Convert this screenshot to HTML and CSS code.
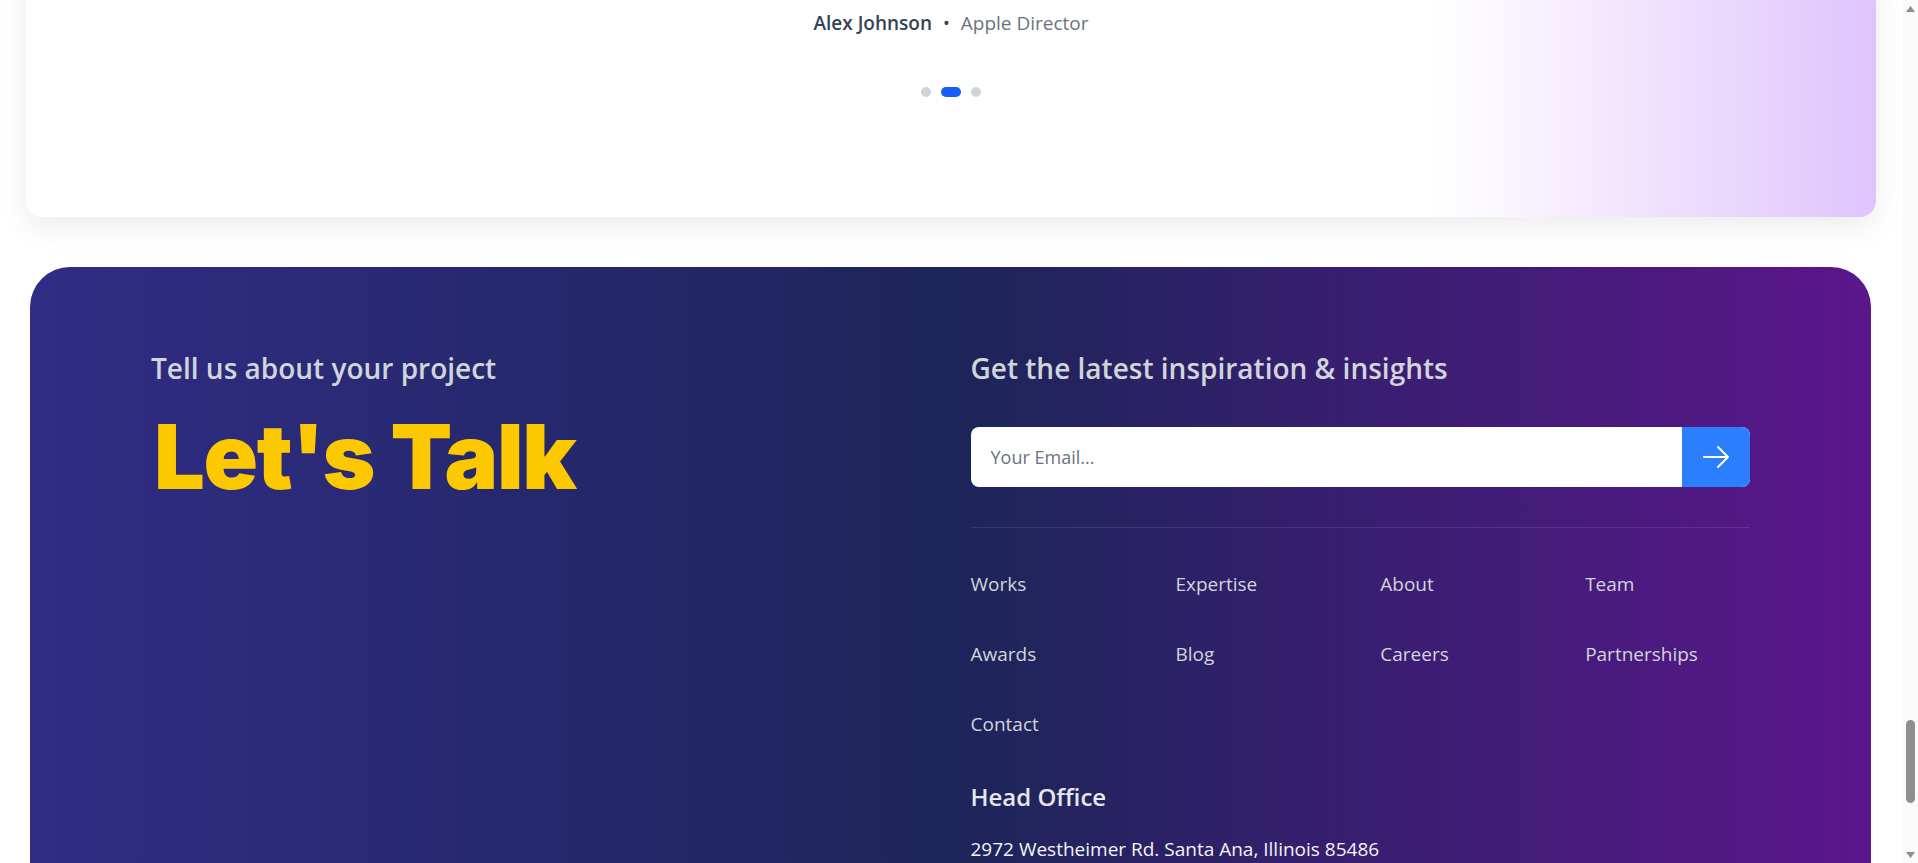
FILE: index.html
```html
<!DOCTYPE html>
<html lang="en">
<head>
<meta charset="utf-8">
<title>Let's Talk</title>
<link rel="stylesheet" href="styles.css">
</head>
<body>
  <section class="testimonial">
    <div class="author">
      <span class="name">Alex Johnson</span>
      <span class="sep">•</span>
      <span class="role">Apple Director</span>
    </div>
    <div class="dots">
      <span class="dot"></span>
      <span class="dot active"></span>
      <span class="dot"></span>
    </div>
  </section>

  <footer class="footer">
    <div class="footer-inner">
      <div class="col-left">
        <h3 class="eyebrow">Tell us about your project</h3>
        <h2 class="talk">Let's Talk</h2>
      </div>
      <div class="col-right">
        <h3 class="eyebrow">Get the latest inspiration &amp; insights</h3>
        <form class="subscribe">
          <input class="email" type="email" placeholder="Your Email...">
          <button class="send" type="button" aria-label="Subscribe">
            <svg width="32" height="32" viewBox="0 0 24 24" fill="none" stroke="#fff" stroke-width="1.5" stroke-linecap="round" stroke-linejoin="round"><path d="M13.5 4.5 21 12m0 0-7.5 7.5M21 12H3"/></svg>
          </button>
        </form>
        <hr class="divider">
        <nav class="links">
          <a href="#">Works</a>
          <a href="#">Expertise</a>
          <a href="#">About</a>
          <a href="#">Team</a>
          <a href="#">Awards</a>
          <a href="#">Blog</a>
          <a href="#">Careers</a>
          <a href="#">Partnerships</a>
          <a href="#">Contact</a>
        </nav>
        <h4 class="office-title">Head Office</h4>
        <p class="address">2972 Westheimer Rd. Santa Ana, Illinois 85486</p>
      </div>
    </div>
  </footer>

  <div class="scrollbar" aria-hidden="true">
    <svg class="sb-arrow sb-up" width="9" height="6" viewBox="0 0 9 6"><polygon points="0,6 4.5,0 9,6" fill="#8d8d8d"/></svg>
    <span class="sb-thumb"></span>
    <svg class="sb-arrow sb-down" width="9" height="6" viewBox="0 0 9 6"><polygon points="0,0 9,0 4.5,6" fill="#8d8d8d"/></svg>
  </div>
</body>
</html>
```

FILE: styles.css
```css
html, body {
  margin: 0;
  padding: 0;
}

body {
  padding-right: 15px;
  background: #ffffff;
  font-family: "Open Sans", "Noto Sans", sans-serif;
}

/* ---------- testimonial card (scrolled, top cut off) ---------- */
.testimonial {
  margin: -31px 27px 0 26px;
  padding: 40px 0 120px;
  border-radius: 16px;
  background: linear-gradient(to right, #ffffff 76%, #dfc4fc 100%);
  box-shadow: 0 10px 30px rgba(0, 0, 0, 0.08);
}

.author {
  display: flex;
  justify-content: center;
  align-items: baseline;
  gap: 11px;
  font-size: 19px;
  line-height: 28px;
}

.name {
  font-weight: 600;
  color: #364153;
}

.sep {
  color: #364153;
  font-size: 18px;
}

.role {
  color: #6a7282;
}

.dots {
  display: flex;
  justify-content: center;
  gap: 10px;
  margin-top: 50px;
}

.dot {
  width: 10px;
  height: 10px;
  border-radius: 5px;
  background: #d1d5db;
}

.dot.active {
  width: 20px;
  background: #155dfc;
}

/* ---------- footer ---------- */
.footer {
  margin: 50px 32px 0 30px;
  padding: 83px 121px 140px;
  border-radius: 40px;
  background: linear-gradient(to right, #312c85 0%, #1c2559 50%, #5b168c 100%);
}

.footer-inner {
  display: grid;
  grid-template-columns: 1fr 1fr;
  column-gap: 40px;
}

.eyebrow {
  margin: 0;
  font-size: 28px;
  line-height: 36px;
  font-weight: 600;
  color: #d1d5db;
}

.talk {
  margin: 25px 0 0;
  padding-left: 3px;
  font-family: "Inter", "Lato", sans-serif;
  font-weight: 900;
  font-size: 90px;
  line-height: 92px;
  letter-spacing: -1.3px;
  color: #fcc800;
}

.subscribe {
  display: flex;
  height: 60px;
  margin: 41px 0 0;
  border-radius: 8px;
  overflow: hidden;
  background: #ffffff;
}

.email {
  flex: 1;
  min-width: 0;
  border: 0;
  outline: none;
  padding: 0 20px;
  background: transparent;
  font-family: "Open Sans", sans-serif;
  font-size: 18px;
  color: #111827;
}

.email::placeholder {
  color: #6a7282;
}

.send {
  width: 68px;
  border: 0;
  padding: 0;
  background: #2b7fff;
  display: flex;
  align-items: center;
  justify-content: center;
  cursor: pointer;
}

.divider {
  margin: 40px 0 0;
  border: 0;
  height: 1px;
  background: rgba(255, 255, 255, 0.1);
}

.links {
  display: grid;
  grid-template-columns: repeat(4, 1fr);
  column-gap: 40px;
  row-gap: 42px;
  margin-top: 42px;
}

.links a {
  font-size: 19px;
  line-height: 28px;
  color: #d1d5db;
  text-decoration: none;
}

.office-title {
  margin: 43px 0 0;
  font-size: 24px;
  line-height: 32px;
  font-weight: 600;
  color: #e5e7eb;
}

.address {
  margin: 22px 0 0;
  font-size: 19px;
  line-height: 28px;
  color: #f3f4f6;
}

/* ---------- browser scrollbar (window chrome) ---------- */
.scrollbar {
  position: fixed;
  top: 0;
  right: 0;
  width: 15px;
  height: 100%;
  background: #fafafa;
}

.sb-arrow {
  position: absolute;
  left: 3px;
}

.sb-up {
  top: 6px;
}

.sb-down {
  bottom: 5px;
}

.sb-thumb {
  position: absolute;
  top: 720px;
  left: 3px;
  width: 9px;
  height: 83px;
  border-radius: 5px;
  background: #8f8f8f;
}
```
